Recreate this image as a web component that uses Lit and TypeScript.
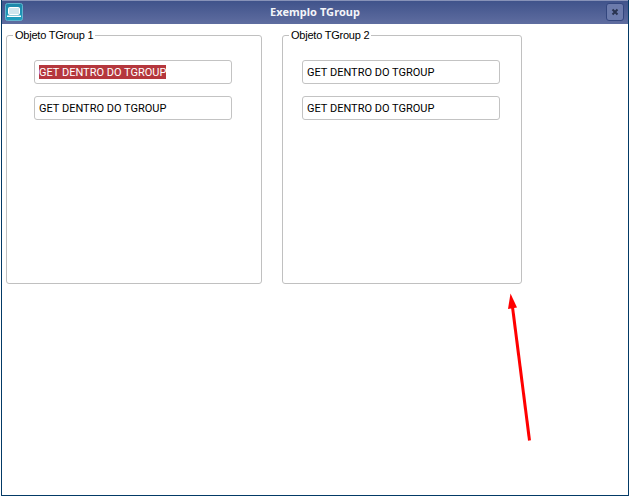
import { LitElement, html, css } from "lit";
import { customElement, property } from "lit/decorators.js";

@customElement("get-field")
class GetField extends LitElement {
  @property() value = "";
  @property({ type: Boolean }) selected = false;
  static styles = css`
    :host { display: block; }
    .field {
      box-sizing: border-box; width: 198px; height: 24px;
      border: 1px solid #c3c3c3; border-radius: 3px; background: #fff;
      padding: 4px 0 0 4px;
      font: 11px/16px Roboto, sans-serif; color: #000; white-space: nowrap;
    }
    .text { display: block; height: 14px; width: 127px; }
    .selected { background: #b5373d; color: #fff; }
  `;
  render() {
    return html`<div class="field"><span class="text ${this.selected ? "selected" : ""}">${this.value}</span></div>`;
  }
}

@customElement("t-group")
class TGroup extends LitElement {
  @property() label = "";
  static styles = css`
    :host { display: block; box-sizing: border-box; height: 249px; border: 1px solid #c0c0c0; border-radius: 3px; }
    .label {
      display: block; width: max-content; height: 14px; margin: -8px 0 0 6px; padding: 0 2px;
      background: #fff; font: 11px/14px "Liberation Sans", sans-serif; letter-spacing: -0.23px; color: #000; white-space: nowrap;
    }
    .fields { display: flex; flex-direction: column; gap: 12px; padding-top: 18px; }
  `;
  render() {
    return html`<span class="label">${this.label}</span><div class="fields"><slot></slot></div>`;
  }
}

@customElement("app-root")
class AppRoot extends LitElement {
  static styles = css`
    :host { display: block; position: relative; width: 633px; height: 501px; background: #fff; overflow: hidden; }
    .window {
      box-sizing: border-box; width: 628px; height: 496px; margin-left: 1px;
      border: 1px solid #033a66; border-top: 0; border-radius: 0 0 1px 1px; background: #fff;
    }
    .bar {
      box-sizing: border-box; height: 24px; display: grid; grid-template-columns: 24px 1fr 24px;
      background: linear-gradient(#40538b, #5f6da0); border-top: 1px solid #8792b8;
    }
    .app { display: block; margin: 1px 0 0 3px; }
    .title {
      text-align: center; color: #f4f5f9; white-space: nowrap;
      font: 700 11px/21px "Noto Sans", sans-serif; letter-spacing: 0.05px;
    }
    .close { display: block; margin: 2px 0 0 2px; }
    .groups { display: flex; gap: 20px; padding: 11px 0 0 4px; }
    .one { width: 256px; }
    .two { width: 240px; }
    .one get-field { margin-left: 27px; }
    .two get-field { margin-left: 19px; }
    .arrow { position: absolute; left: 500px; top: 285px; }
  `;
  render() {
    return html`
      <div class="window">
        <div class="bar">
          <svg class="app" width="18" height="20" viewBox="0 0 18 20">
            <defs><linearGradient id="g" x1="0" y1="0" x2="0" y2="1"><stop stop-color="#1c86a8"/><stop offset="1" stop-color="#20a0c0"/></linearGradient></defs>
            <rect x=".5" y="1.5" width="17" height="17" rx="2" fill="url(#g)" stroke="#62b4ce"/>
            <rect x="3.5" y="5.5" width="11" height="7" rx="1" fill="#cfe5ed" stroke="#fff"/>
            <path d="M2 13.5h14v1.5H2z" fill="#fff"/>
          </svg>
          <div class="title">Exemplo TGroup</div>
          <svg class="close" width="18" height="18" viewBox="0 0 18 18">
            <rect x=".5" y=".5" width="17" height="17" rx="2.5" fill="#6c7bac" stroke="#33467e"/>
            <path d="M6.5 6.5l5 5m0-5l-5 5" stroke="#29334f" stroke-width="2"/>
          </svg>
        </div>
        <div class="groups">
          <t-group class="one" label="Objeto TGroup 1">
            <get-field selected value="GET DENTRO DO TGROUP"></get-field>
            <get-field value="GET DENTRO DO TGROUP"></get-field>
          </t-group>
          <t-group class="two" label="Objeto TGroup 2">
            <get-field value="GET DENTRO DO TGROUP"></get-field>
            <get-field value="GET DENTRO DO TGROUP"></get-field>
          </t-group>
        </div>
      </div>
      <svg class="arrow" width="40" height="165" viewBox="500 285 40 165">
        <path d="M512.5 307L529.5 440.5" stroke="#f00" stroke-width="3"/>
        <path d="M510.5 293.5L517 307.5L508 309z" fill="#f00"/>
      </svg>
    `;
  }
}
